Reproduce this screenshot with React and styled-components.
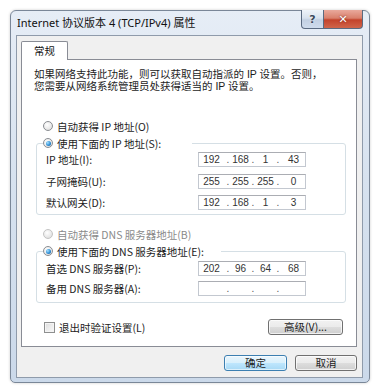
import React from 'react';
import styled, { createGlobalStyle } from 'styled-components';

const Global = createGlobalStyle`
  html, body { margin: 0; padding: 0; background: #fff; }
  body { width: 387px; height: 388px; overflow: hidden; }
`;

const CJK = `"Noto Sans CJK SC", "Noto Sans", sans-serif`;

const Page = styled.div`
  padding: 10px 0 0 10px;
`;

const Window = styled.div`
  width: 360px;
  height: 373px;
  box-sizing: border-box;
  border: 1px solid #7a8798;
  border-radius: 6px 6px 5px 5px;
  background: linear-gradient(180deg, #e6edf6 0%, #d7e2ef 45%, #cbd9ea 100%);
  display: flex;
  flex-direction: column;
  box-shadow: 0 0 3px rgba(0, 0, 0, 0.2);
`;

const TitleBar = styled.div`
  height: 24px;
  display: flex;
  align-items: flex-start;
  padding: 0 6px 0 6px;
`;

const Title = styled.div`
  flex: 1;
  font-family: "Noto Sans", ${CJK};
  font-size: 11px;
  line-height: 24px;
  color: #111;
  white-space: nowrap;
`;

const CaptionButtons = styled.div`
  display: flex;
  margin-top: -1px;
`;

const CaptionBtn = styled.div`
  width: ${p => p.$w}px;
  height: 19px;
  box-sizing: border-box;
  border: 1px solid #5a6a80;
  border-top: none;
  display: flex;
  align-items: center;
  justify-content: center;
  font-family: "DejaVu Sans", sans-serif;
  font-weight: bold;
  font-size: 11px;
  ${p => p.$close ? `
    background: linear-gradient(180deg, #e9a99c 0%, #d9806c 45%, #c3432b 55%, #d0654a 100%);
    border-radius: 0 0 4px 0;
    color: #fff;
    text-shadow: 0 0 2px #6a1b10;
    border-left: none;
  ` : `
    background: linear-gradient(180deg, #eef3f9 0%, #d8e2ee 45%, #c2d0e2 55%, #cfdcec 100%);
    border-radius: 0 0 0 4px;
    color: #3c4a5c;
    text-shadow: 0 0 2px #fff;
  `}
`;

const Client = styled.div`
  flex: 1;
  margin: 0 6px 4px 5px;
  border: 1px solid #8f9bab;
  background: #f0f0f0;
  display: flex;
  flex-direction: column;
  padding: 5px 5px 6px 4px;
`;

const Tabs = styled.div`
  display: flex;
  position: relative;
  z-index: 1;
`;

const Tab = styled.div`
  width: 47px;
  height: 19px;
  box-sizing: border-box;
  border: 1px solid #898c95;
  border-bottom: none;
  border-radius: 2px 2px 0 0;
  background: #fff;
  font-family: ${CJK};
  font-size: 10.5px;
  line-height: 18px;
  text-align: center;
  color: #111;
  margin-bottom: -1px;
`;

const Pane = styled.div`
  height: 288px;
  box-sizing: border-box;
  border: 1px solid #898c95;
  background: #fff;
  padding: 8px 10px 0 12px;
  display: flex;
  flex-direction: column;
  font-family: ${CJK};
  font-size: 10.5px;
  color: #1c1c1c;
`;

const Intro = styled.p`
  margin: 0;
  font-family: "Liberation Sans", ${CJK};
  line-height: 12px;
  white-space: nowrap;
`;

const Section = styled.div`
  margin-left: 2px;
  display: flex;
  flex-direction: column;
`;

const RadioRow = styled.label`
  display: flex;
  align-items: center;
  height: 16px;
  gap: 4px;
  padding-left: ${p => (p.$inset ? 7 : 0)}px;
  margin-top: ${p => p.$mt || 0}px;
  color: ${p => (p.$disabled ? '#8a8a8a' : '#1c1c1c')};
  white-space: nowrap;
`;

const RadioDot = styled.span`
  width: 10px;
  height: 10px;
  box-sizing: border-box;
  border-radius: 50%;
  border: 1px solid ${p => (p.$disabled ? '#c4c4c4' : '#8a8d92')};
  background: radial-gradient(circle at 40% 35%, #ffffff 0%, #e8e8e8 60%, #d4d4d4 100%);
  display: flex;
  align-items: center;
  justify-content: center;
  flex: none;
  &::after {
    content: '';
    display: ${p => (p.$checked ? 'block' : 'none')};
    width: 5px;
    height: 5px;
    border-radius: 50%;
    background: radial-gradient(circle at 35% 35%, #a8e2ff 0%, #2f8fd6 55%, #1c5d98 100%);
  }
`;

const Group = styled.fieldset`
  margin: ${p => p.$mt}px 0 0 0;
  padding: ${p => p.$pt}px 39px ${p => p.$pb}px 9px;
  border: 1px solid #d5dfe5;
  border-radius: 3px;
  min-width: 0;
  display: grid;
  grid-template-columns: 152px 108px;
  row-gap: ${p => p.$gap}px;
  align-items: center;
`;

const Legend = styled.legend`
  padding: 0;
  margin-left: -3px;
  width: ${p => p.$w}px;
`;

const FieldLabel = styled.span`
  white-space: nowrap;
  line-height: 15px;
`;

const IpBox = styled.div`
  height: 15px;
  box-sizing: border-box;
  border: 1px solid #c3c8d0;
  border-top-color: #abadb3;
  background: #fff;
  display: grid;
  grid-template-columns: 25px 8px 17px 8px 17px 8px 1fr;
  align-items: center;
  font-family: "Liberation Sans", Arial, sans-serif;
  font-size: 10px;
  color: #333;
  line-height: 13px;
`;

const Octet = styled.span`
  text-align: center;
`;

const Dot = styled.span`
  text-align: center;
  color: #555;
`;

const BottomRow = styled.div`
  margin: 16px 0 0 10px;
  display: flex;
  align-items: center;
  justify-content: space-between;
  width: 299px;
`;

const CheckRow = styled.label`
  display: flex;
  align-items: center;
  gap: 4px;
  white-space: nowrap;
`;

const CheckBox = styled.span`
  width: 11px;
  height: 11px;
  box-sizing: border-box;
  border: 1px solid #8e8f8f;
  background: linear-gradient(135deg, #dcdcdc 0%, #ececec 50%, #f8f8f8 100%);
  box-shadow: inset 0 0 0 1px #f4f4f4;
  flex: none;
`;

const Button = styled.button`
  width: ${p => p.$w}px;
  height: 16px;
  box-sizing: border-box;
  padding: 0;
  border: 1px solid ${p => (p.$default ? '#3c7fb1' : '#707070')};
  border-radius: 3px;
  background: ${p =>
    p.$default
      ? 'linear-gradient(180deg, #eaf6fd 0%, #d9f0fc 48%, #bee6fd 52%, #a7d9f5 100%)'
      : 'linear-gradient(180deg, #f2f2f2 0%, #ebebeb 48%, #dddddd 52%, #cfcfcf 100%)'};
  box-shadow: inset 0 0 0 1px ${p => (p.$default ? 'rgba(255,255,255,0.6)' : 'rgba(255,255,255,0.7)')};
  font-family: ${CJK};
  font-size: 10.5px;
  line-height: 14px;
  color: #1c1c1c;
  text-align: center;
`;

const Footer = styled.div`
  display: flex;
  justify-content: flex-end;
  gap: 8px;
  margin-top: 8px;
`;

const Ip = ({ v }) => (
  <IpBox>
    <Octet>{v[0]}</Octet>
    <Dot>.</Dot>
    <Octet>{v[1]}</Octet>
    <Dot>.</Dot>
    <Octet>{v[2]}</Octet>
    <Dot>.</Dot>
    <Octet>{v[3]}</Octet>
  </IpBox>
);

export default function App() {
  return (
    <>
      <Global />
      <Page>
        <Window>
          <TitleBar>
            <Title>Internet 协议版本 4 (TCP/IPv4) 属性</Title>
            <CaptionButtons>
              <CaptionBtn $w={23}>?</CaptionBtn>
              <CaptionBtn $w={39} $close>✕</CaptionBtn>
            </CaptionButtons>
          </TitleBar>
          <Client>
            <Tabs>
              <Tab>常规</Tab>
            </Tabs>
            <Pane>
              <Intro>
                如果网络支持此功能，则可以获取自动指派的 IP 设置。否则，
                <br />
                您需要从网络系统管理员处获得适当的 IP 设置。
              </Intro>
              <Section>
                <RadioRow $inset $mt={26}>
                  <RadioDot />
                  自动获得 IP 地址(O)
                </RadioRow>
                <Group $mt={1} $pt={1} $pb={4} $gap={6.5}>
                  <Legend $w={149}>
                    <RadioRow>
                      <RadioDot $checked />
                      使用下面的 IP 地址(S):
                    </RadioRow>
                  </Legend>
                  <FieldLabel>IP 地址(I):</FieldLabel>
                  <Ip v={['192', '168', '1', '43']} />
                  <FieldLabel>子网掩码(U):</FieldLabel>
                  <Ip v={['255', '255', '255', '0']} />
                  <FieldLabel>默认网关(D):</FieldLabel>
                  <Ip v={['192', '168', '1', '3']} />
                </Group>
                <RadioRow $inset $mt={11} $disabled>
                  <RadioDot $disabled />
                  自动获得 DNS 服务器地址(B)
                </RadioRow>
                <Group $mt={1} $pt={2} $pb={6} $gap={5}>
                  <Legend $w={178}>
                    <RadioRow>
                      <RadioDot $checked />
                      使用下面的 DNS 服务器地址(E):
                    </RadioRow>
                  </Legend>
                  <FieldLabel>首选 DNS 服务器(P):</FieldLabel>
                  <Ip v={['202', '96', '64', '68']} />
                  <FieldLabel>备用 DNS 服务器(A):</FieldLabel>
                  <Ip v={['', '', '', '']} />
                </Group>
              </Section>
              <BottomRow>
                <CheckRow>
                  <CheckBox />
                  退出时验证设置(L)
                </CheckRow>
                <Button $w={75}>高级(V)...</Button>
              </BottomRow>
            </Pane>
            <Footer>
              <Button $w={63} $default>确定</Button>
              <Button $w={62}>取消</Button>
            </Footer>
          </Client>
        </Window>
      </Page>
    </>
  );
}
